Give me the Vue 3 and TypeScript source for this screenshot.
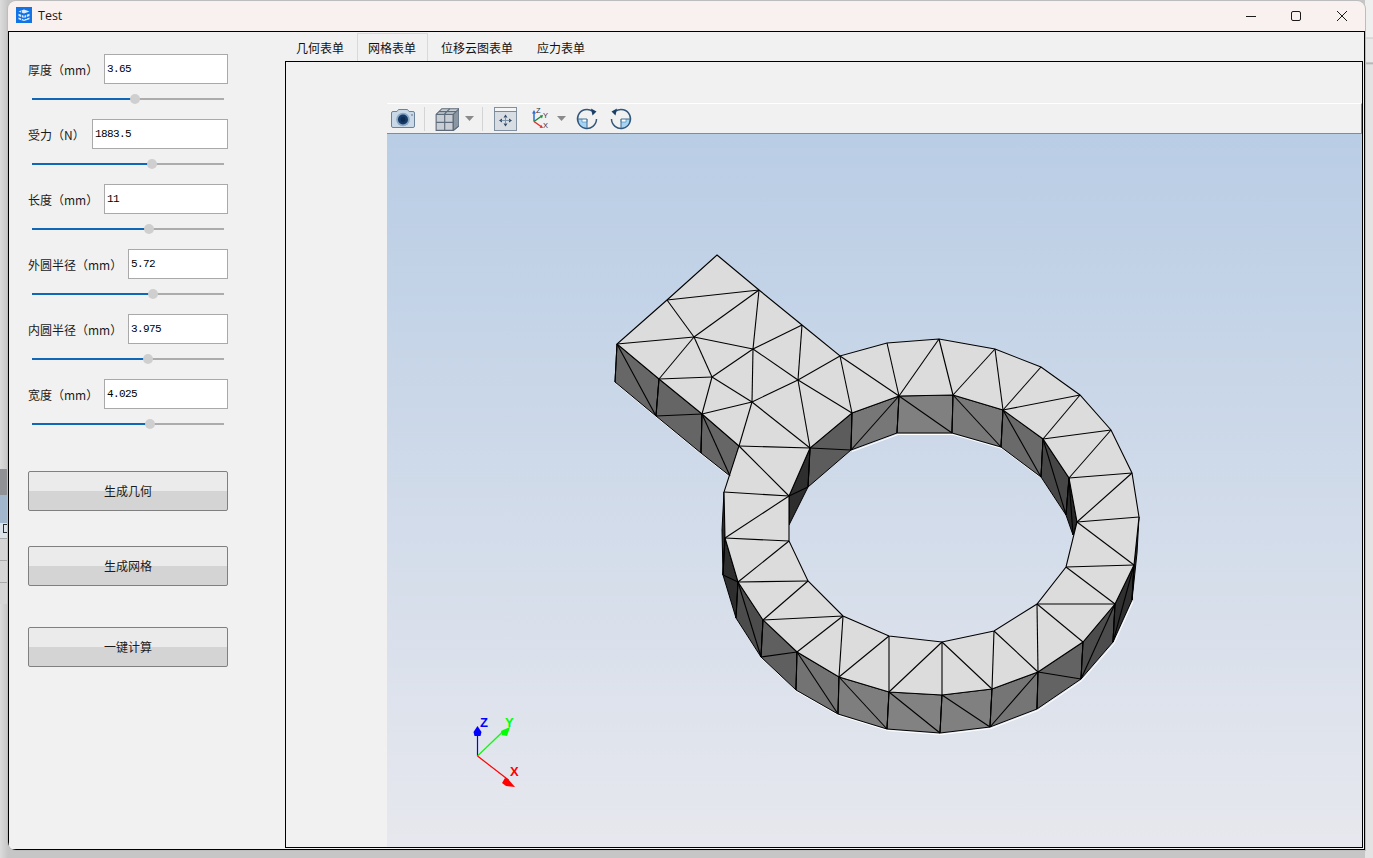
<script setup lang="ts">
type Pt = [number, number]
type Wall = { pts: Pt[]; fill: string }

// 表单参数，inputWidth 对应每行输入框的宽度
const fields = [
  { label: '厚度（mm）', value: '3.65', inputWidth: 124, percent: 53.5 },
  { label: '受力（N）', value: '1883.5', inputWidth: 136, percent: 62.5 },
  { label: '长度（mm）', value: '11', inputWidth: 124, percent: 61 },
  { label: '外圆半径（mm）', value: '5.72', inputWidth: 100, percent: 63 },
  { label: '内圆半径（mm）', value: '3.975', inputWidth: 100, percent: 60.5 },
  { label: '宽度（mm）', value: '4.025', inputWidth: 124, percent: 61.5 },
]

const actions = [
  { text: '生成几何', cls: 'first' },
  { text: '生成网格', cls: 'second' },
  { text: '一键计算', cls: 'third' },
]

const tabs = ['几何表单', '网格表单', '位移云图表单', '应力表单']

const toPoints = (pts: Pt[]) => pts.map((p) => p.join(',')).join(' ')

// 网格顶面外轮廓和内孔，坐标直接用窗口像素
const outer: Pt[] = [
  [717, 255], [759, 290], [802, 325], [840, 356], [887, 343], [939, 339], [995, 349], [1041, 367],
  [1080, 395], [1111, 430], [1132, 473], [1139, 517], [1134, 565], [1115, 604], [1083, 642],
  [1038, 672], [992, 689], [942, 695], [889, 692], [839, 677], [797, 652], [763, 620], [738, 582],
  [725, 538], [724, 492], [739, 446], [702, 414], [659, 379], [617, 344], [667, 300],
]
const inner: Pt[] = [
  [899, 396], [953, 395], [1003, 410], [1043, 439], [1069, 478], [1077, 522], [1066, 567],
  [1037, 604], [994, 631], [942, 642], [889, 636], [843, 616], [808, 581], [789, 541], [789, 496],
  [810, 448], [852, 413],
]
const topPath = `M${outer.map((p) => p.join(' ')).join('L')}ZM${inner.map((p) => p.join(' ')).join('L')}Z`

// 侧面四边形，颜色按朝向取近似值
const walls: Wall[] = [
  { pts: [[617, 344], [659, 379], [656, 416], [615, 382]], fill: '#676767' },
  { pts: [[659, 379], [702, 414], [701, 453], [656, 416]], fill: '#656565' },
  { pts: [[702, 414], [739, 446], [730, 476], [701, 453]], fill: '#666666' },
  { pts: [[810, 448], [852, 413], [851, 450], [808, 487]], fill: '#5c5c5c' },
  { pts: [[789, 496], [810, 448], [808, 487], [789, 525]], fill: '#2e2e2e' },
  { pts: [[852, 413], [899, 396], [897, 433], [851, 450]], fill: '#777777' },
  { pts: [[899, 396], [953, 395], [952, 433], [897, 433]], fill: '#808080' },
  { pts: [[953, 395], [1003, 410], [1001, 447], [952, 433]], fill: '#797979' },
  { pts: [[1003, 410], [1043, 439], [1041, 477], [1001, 447]], fill: '#6a6a6a' },
  { pts: [[1043, 439], [1069, 478], [1066, 515], [1041, 477]], fill: '#464646' },
  { pts: [[1069, 478], [1077, 522], [1073, 535], [1066, 515]], fill: '#2a2a2a' },
  { pts: [[724, 492], [725, 538], [723, 575], [722, 530]], fill: '#2c2c2c' },
  { pts: [[725, 538], [738, 582], [736, 618], [723, 575]], fill: '#2e2e2e' },
  { pts: [[738, 582], [763, 620], [761, 657], [736, 618]], fill: '#4c4c4c' },
  { pts: [[763, 620], [797, 652], [796, 690], [761, 657]], fill: '#5f5f5f' },
  { pts: [[797, 652], [839, 677], [838, 714], [796, 690]], fill: '#737373' },
  { pts: [[839, 677], [889, 692], [887, 729], [838, 714]], fill: '#7e7e7e' },
  { pts: [[889, 692], [942, 695], [940, 733], [887, 729]], fill: '#828282' },
  { pts: [[942, 695], [992, 689], [990, 727], [940, 733]], fill: '#808080' },
  { pts: [[992, 689], [1038, 672], [1037, 709], [990, 727]], fill: '#757575' },
  { pts: [[1038, 672], [1083, 642], [1081, 679], [1037, 709]], fill: '#636363' },
  { pts: [[1083, 642], [1115, 604], [1113, 642], [1081, 679]], fill: '#4c4c4c' },
  { pts: [[1115, 604], [1134, 565], [1132, 600], [1113, 642]], fill: '#303030' },
  { pts: [[1134, 565], [1139, 517], [1137, 553], [1132, 600]], fill: '#2a2a2a' },
]

// 底边下面那条细白线
const glint: Pt[] = [
  [615, 382], [656, 416], [701, 453], [730, 476],
]
const glintRing: Pt[] = [
  [736, 618], [761, 657], [796, 690], [838, 714], [887, 729], [940, 733], [990, 727], [1037, 709],
  [1081, 679], [1113, 642], [1132, 600],
]
const glintHole: Pt[] = [
  [851, 450], [897, 433], [952, 433], [1001, 447], [1041, 477], [1066, 515],
]

// 三角网格的内部边
const edges: [number, number, number, number][] = [
  // 方形凸台
  [667, 300, 759, 290], [759, 290, 694, 337], [667, 300, 694, 337], [617, 344, 694, 337],
  [694, 337, 659, 379], [694, 337, 753, 349], [694, 337, 712, 377], [759, 290, 753, 349],
  [753, 349, 802, 325], [753, 349, 798, 380], [753, 349, 712, 377], [753, 349, 752, 402],
  [802, 325, 798, 380], [798, 380, 840, 356], [798, 380, 852, 413], [798, 380, 752, 402],
  [798, 380, 810, 448], [659, 379, 712, 377], [712, 377, 702, 414], [712, 377, 752, 402],
  [702, 414, 752, 402], [752, 402, 739, 446], [752, 402, 810, 448], [739, 446, 810, 448],
  [739, 446, 789, 496], [724, 492, 789, 496], [840, 356, 852, 413], [840, 356, 899, 396],
  // 圆环顶面
  [887, 343, 899, 396], [939, 339, 899, 396], [939, 339, 953, 395], [995, 349, 953, 395],
  [995, 349, 1003, 410], [1041, 367, 1003, 410], [1080, 395, 1003, 410], [1080, 395, 1043, 439],
  [1111, 430, 1043, 439], [1111, 430, 1069, 478], [1132, 473, 1069, 478], [1132, 473, 1077, 522],
  [1139, 517, 1077, 522], [1134, 565, 1077, 522], [1134, 565, 1066, 567], [1115, 604, 1066, 567],
  [1115, 604, 1037, 604], [1083, 642, 1037, 604], [1038, 672, 1037, 604], [1038, 672, 994, 631],
  [992, 689, 994, 631], [992, 689, 942, 642], [942, 695, 942, 642], [889, 692, 942, 642],
  [889, 692, 889, 636], [839, 677, 889, 636], [839, 677, 843, 616], [797, 652, 843, 616],
  [763, 620, 843, 616], [763, 620, 808, 581], [738, 582, 808, 581], [738, 582, 789, 541],
  [725, 538, 789, 541], [725, 538, 789, 496],
  // 凸台侧面
  [617, 344, 615, 382], [617, 344, 656, 416], [659, 379, 656, 416], [656, 416, 702, 414],
  [702, 414, 701, 453], [702, 414, 730, 476],
  // 内孔侧面
  [810, 448, 851, 450], [810, 448, 808, 487], [789, 496, 808, 487], [852, 413, 851, 450],
  [899, 396, 851, 450], [899, 396, 897, 433], [899, 396, 952, 433], [953, 395, 952, 433],
  [953, 395, 1001, 447], [1003, 410, 1001, 447], [1003, 410, 1041, 477], [1043, 439, 1041, 477],
  [1043, 439, 1066, 515], [1069, 478, 1066, 515], [1069, 478, 1073, 535],
  // 外圈侧面
  [725, 538, 723, 575], [723, 575, 738, 582], [738, 582, 736, 618], [738, 582, 761, 657],
  [763, 620, 761, 657], [761, 657, 797, 652], [797, 652, 796, 690], [797, 652, 838, 714],
  [839, 677, 838, 714], [839, 677, 887, 729], [889, 692, 887, 729], [889, 692, 940, 733],
  [942, 695, 940, 733], [942, 695, 990, 727], [992, 689, 990, 727], [1038, 672, 990, 727],
  [1038, 672, 1037, 709], [1038, 672, 1081, 679], [1083, 642, 1081, 679], [1115, 604, 1081, 679],
  [1115, 604, 1113, 642], [1134, 565, 1113, 642], [1134, 565, 1132, 600],
]
</script>

<template>
  <div class="desktop">
    <div class="backdrop">
      <div class="band-dark"></div>
      <div class="band-blue"><span class="stray"></span></div>
      <div class="band-row"></div>
      <div class="band-row"></div>
      <div class="band-row"></div>
    </div>
    <div class="backdrop-right"></div>

    <div class="window">
      <header class="titlebar">
        <svg class="app-icon" width="16" height="16" viewBox="0 0 16 16">
          <rect width="16" height="16" fill="#1273e6" />
          <path d="M2.500 4.500 8 2.500l5.500 2L8 6.500z M2.500 6.800v2.200L8 11l5.500-2V6.800L8 8.800z M2.500 10.500v1.700L8 14l5.500-1.800v-1.700L8 12.500z" fill="#dcebfb" />
          <path d="M5.500 3.500v9.500M8 8v5M10.500 7v5" stroke="#1273e6" stroke-width="0.800" />
        </svg>
        <span class="title">Test</span>
        <div class="caption">
          <svg width="46" height="30" viewBox="0 0 46 30">
            <path d="M18 15.500h10" stroke="#1a1a1a" stroke-width="1" />
          </svg>
          <svg width="46" height="30" viewBox="0 0 46 30">
            <rect x="18.500" y="10.500" width="9" height="9" rx="1.500" fill="none" stroke="#1a1a1a" stroke-width="1" />
          </svg>
          <svg width="46" height="30" viewBox="0 0 46 30">
            <path d="M18 10l10 10M28 10L18 20" stroke="#1a1a1a" stroke-width="1" />
          </svg>
        </div>
      </header>

      <div class="client">
        <aside class="panel">
          <div class="fields">
            <div v-for="field in fields" :key="field.label" class="field">
              <div class="field-row">
                <label>{{ field.label }}</label>
                <input :value="field.value" :style="{ width: field.inputWidth + 'px' }" readonly />
              </div>
              <div class="slider">
                <div class="slider-fill" :style="{ width: field.percent + '%' }"></div>
                <div class="slider-thumb" :style="{ left: field.percent + '%' }"></div>
              </div>
            </div>
          </div>
          <button v-for="action in actions" :key="action.text" type="button" :class="action.cls">
            {{ action.text }}
          </button>
        </aside>

        <section class="tabs">
          <nav class="tab-bar">
            <span v-for="(tab, i) in tabs" :key="tab" class="tab" :class="{ active: i === 1 }">{{ tab }}</span>
          </nav>
          <div class="pane">
            <div class="viewer">
              <div class="toolbar">
                <svg class="tool camera" width="26" height="22" viewBox="0 0 26 22">
                  <path d="M3 3.500h4l1.500-2h9l1.500 2h4a1.500 1.500 0 0 1 1.500 1.500v13a1.500 1.500 0 0 1-1.500 1.500H3A1.500 1.500 0 0 1 1.500 18V5A1.500 1.500 0 0 1 3 3.500z" fill="#c9d9e8" stroke="#6d8299" stroke-width="1" />
                  <circle cx="13" cy="11.500" r="6.800" fill="#8aa6c2" />
                  <circle cx="13" cy="11.500" r="5" fill="#143a68" />
                  <circle cx="13" cy="11.500" r="2.400" fill="#0d2a50" />
                  <circle cx="22" cy="7" r="0.800" fill="#50647a" />
                </svg>
                <i class="sep sep-a"></i>
                <svg class="tool cube" width="24" height="24" viewBox="1 1.500 21 21">
                  <path d="M2 8 7 3h15v15l-5 4H2z" fill="#c9ced4" stroke="#5d6b7a" stroke-width="1" />
                  <path d="M2 8h15v14M2 15h15M9.500 8v14M4.500 5.500h15M14 3 9 8" fill="none" stroke="#5d6b7a" stroke-width="1" />
                  <path d="M17 8l5-5v15l-5 4z" fill="#8b96a3" stroke="#5d6b7a" stroke-width="1" />
                </svg>
                <svg class="tool caret-a" width="9" height="5" viewBox="0 0 9 5"><path d="M0 0h9L4.500 5z" fill="#8a8a8a" /></svg>
                <i class="sep sep-b"></i>
                <svg class="tool fit" width="23" height="24" viewBox="0 0 23 24">
                  <rect x="0.500" y="0.500" width="22" height="23" fill="#d8dde3" stroke="#8291a1" stroke-width="1" />
                  <rect x="1" y="1" width="21" height="3" fill="#f3f5f7" />
                  <path d="M0 4.500h23" stroke="#7a8998" stroke-width="1" />
                  <path d="M11.500 7.500l2 3h-4zM11.500 19.500l-2-3h4zM5 13.500l3-2v4zM18 13.500l-3 2v-4z" fill="#2e4a66" />
                  <path d="M11.500 10v7M7.500 13.500h8" stroke="#7f94a8" stroke-width="1" />
                </svg>
                <svg class="tool axes" width="22" height="24" viewBox="0 0 22 24">
                  <path d="M6 14.500V5" stroke="#2b6bd6" stroke-width="1.500" />
                  <path d="M6 3l2 3.500H4z" fill="#2b6bd6" />
                  <path d="M6 14.500l7-5" stroke="#1c8a3c" stroke-width="1.500" />
                  <path d="M15 8l-1 3.500-2.200-3z" fill="#1c8a3c" />
                  <path d="M6 14.500l7 5" stroke="#e02e2e" stroke-width="1.500" />
                  <path d="M15 21l-3.500-.2 2-2.800z" fill="#e02e2e" />
                  <text x="8" y="6" class="axis-mini">Z</text>
                  <text x="15" y="11" class="axis-mini">Y</text>
                  <text x="15" y="21" class="axis-mini">X</text>
                </svg>
                <svg class="tool caret-b" width="9" height="5" viewBox="0 0 9 5"><path d="M0 0h9L4.500 5z" fill="#8a8a8a" /></svg>
                <svg class="tool rot-a" width="24" height="24" viewBox="0 0 24 24">
                  <path d="M12 12H2.500a9.500 9.500 0 0 0 9.500 9.500z" fill="#a6d4f2" />
                  <path d="M7 12v3h5v-3" fill="#fff" stroke="#5c9bc8" stroke-width="0.800" />
                  <path d="M2.500 12h9.500v9.500" fill="none" stroke="#3f6f96" stroke-width="1" />
                  <path d="M17.500 4.200A9.500 9.500 0 1 0 21.500 12" fill="none" stroke="#33587c" stroke-width="1.500" />
                  <path d="M16 1.500l5.500 3-4 4z" fill="#1c3f66" />
                </svg>
                <svg class="tool rot-b" width="24" height="24" viewBox="0 0 24 24">
                  <path d="M12 12h9.500a9.500 9.500 0 0 1-9.500 9.500z" fill="#a6d4f2" />
                  <path d="M17 12v3h-5v-3" fill="#fff" stroke="#5c9bc8" stroke-width="0.800" />
                  <path d="M21.500 12H12v9.500" fill="none" stroke="#3f6f96" stroke-width="1" />
                  <path d="M6.500 4.200A9.500 9.500 0 1 1 2.500 12" fill="none" stroke="#33587c" stroke-width="1.500" />
                  <path d="M8 1.500l-5.500 3 4 4z" fill="#1c3f66" />
                </svg>
              </div>

              <svg class="scene" viewBox="387 134 975 713" width="975" height="713">
                <defs>
                  <linearGradient id="sky" x1="0" y1="0" x2="0" y2="1">
                    <stop offset="0" stop-color="#b9cde5" />
                    <stop offset="1" stop-color="#e7e8ee" />
                  </linearGradient>
                </defs>
                <rect x="387" y="134" width="975" height="713" fill="url(#sky)" />

                <polyline :points="toPoints(glint)" transform="translate(1 1.500)" class="glint" />
                <polyline :points="toPoints(glintRing)" transform="translate(1 1.500)" class="glint" />
                <polyline :points="toPoints(glintHole)" transform="translate(1 1.500)" class="glint" />

                <polygon v-for="(w, i) in walls" :key="i" :points="toPoints(w.pts)" :fill="w.fill" stroke="#000" stroke-width="1" />
                <path :d="topPath" fill="#dcdcdc" fill-rule="evenodd" stroke="#000" stroke-width="1.100" />
                <line
                  v-for="(e, i) in edges"
                  :key="'e' + i"
                  :x1="e[0]"
                  :y1="e[1]"
                  :x2="e[2]"
                  :y2="e[3]"
                  stroke="#000"
                  stroke-width="1.100"
                />

                <!-- 左下角坐标轴 -->
                <path d="M477.500 756V732" stroke="#0000ff" stroke-width="1.200" />
                <path d="M477.500 726l4 6-1 4h-6l-1-4z" fill="#0000ff" />
                <path d="M477.500 756l27-26" stroke="#00ff00" stroke-width="1.200" />
                <path d="M510 727l-3 9-5-1-1-4z" fill="#00ff00" />
                <path d="M477.500 756l31 24" stroke="#ff0000" stroke-width="1.200" />
                <path d="M515 787l-9-1-4-3 3-5 3 1z" fill="#ff0000" />
                <text x="480" y="727" class="axis-big" fill="#0000ff">Z</text>
                <text x="505" y="727" class="axis-big" fill="#00ff00">Y</text>
                <text x="510" y="776" class="axis-big" fill="#ff0000">X</text>
              </svg>
            </div>
          </div>
        </section>
      </div>
    </div>
  </div>
</template>

<style>
html,
body {
  margin: 0;
  padding: 0;
  overflow: hidden;
}
</style>

<style scoped>
.desktop {
  position: relative;
  width: 1373px;
  height: 858px;
  padding: 1px 0 0 8px;
  box-sizing: border-box;
  background: linear-gradient(90deg, #dcdcdc, #c6c6c6 8px);
  font-family: 'Noto Sans CJK SC', 'Liberation Sans', sans-serif;
  overflow: hidden;
}

/* 窗口背后露出来的桌面内容 */
.backdrop {
  position: absolute;
  left: 0;
  top: 464px;
  width: 8px;
}

.band-dark {
  height: 26px;
  margin-top: 5px;
  background: #8f9194;
}

.band-blue {
  position: relative;
  height: 43px;
  background: linear-gradient(#a3b7cc 65%, #dde3ea 65%);
}

.stray {
  position: absolute;
  left: 3px;
  top: 29px;
  width: 4px;
  height: 7px;
  border: 1px solid #2b2b2b;
}

.band-row {
  height: 21px;
  border-top: 1px solid #a9a9a9;
  background: #d6d6d6;
}

.backdrop-right {
  position: absolute;
  right: 0;
  top: 0;
  width: 8px;
  height: 100%;
  background: linear-gradient(#efefef 37px, #c8c8c8 38px, #e9e9e9 39px, #e9e9e9 62px, #a8a8a8 63px, #e3e3e3 65px);
}

.window {
  position: relative;
  width: 1357px;
  height: 849px;
  border-radius: 8px 8px 0 8px;
  overflow: hidden;
  box-shadow: 0 0 0 1px #bdbdbd;
}

.titlebar {
  display: flex;
  align-items: center;
  height: 30px;
  padding-left: 8px;
  box-sizing: border-box;
  background: #f8f1ef;
}

.app-icon {
  margin-top: -2px;
}

.title {
  margin: -2px 0 0 6px;
  font-family: 'Open Sans', 'Liberation Sans', sans-serif;
  font-size: 12.500px;
  color: #1a1a1a;
}

.caption {
  display: flex;
  margin-left: auto;
}

.caption svg {
  display: block;
}

.caption svg:first-child {
  margin-right: -1px;
}

.client {
  display: flex;
  height: 819px;
  box-sizing: border-box;
  border: 1px solid #000;
  background: #f1f1f1;
}

.panel {
  position: relative;
  width: 276px;
  flex: none;
  padding: 22px 0 0 19px;
  box-sizing: border-box;
}

.fields {
  width: 200px;
}

.field {
  height: 65px;
}

.field-row {
  display: flex;
  align-items: center;
  justify-content: space-between;
  height: 30px;
}

label {
  font-size: 12px;
  color: #1a1a1a;
  white-space: nowrap;
}

input {
  height: 30px;
  padding: 0 2px;
  box-sizing: border-box;
  border: 1px solid #a9a9a9;
  outline: none;
  background: #fff;
  font-family: 'Liberation Mono', monospace;
  font-size: 11px;
  letter-spacing: -0.600px;
  color: #000;
}

.slider {
  position: relative;
  width: 192px;
  height: 2px;
  margin: 14px 0 0 4px;
  background: #acacac;
}

.slider-fill {
  height: 100%;
  background: #0f68b5;
}

.slider-thumb {
  position: absolute;
  top: -4px;
  width: 10px;
  height: 10px;
  margin-left: -5px;
  border-radius: 50%;
  background: #cfcfcf;
}

button {
  display: block;
  width: 200px;
  height: 40px;
  padding: 0 0 2px;
  box-sizing: border-box;
  border: 1px solid #808080;
  border-radius: 2px;
  background: linear-gradient(#ebebeb 50%, #d4d4d4 50%);
  font-family: inherit;
  font-size: 12px;
  color: #1a1a1a;
}

button.first {
  margin-top: 27px;
}

button.second {
  margin-top: 35px;
}

button.third {
  margin-top: 41px;
}

.tabs {
  display: flex;
  flex-direction: column;
  flex: 1;
  min-width: 0;
}

.tab-bar {
  display: flex;
  height: 29px;
  margin-left: -1px;
  box-sizing: border-box;
}

.tab {
  position: relative;
  height: 28px;
  padding: 6px 11px 0;
  margin-top: 1px;
  box-sizing: border-box;
  border: 1px solid transparent;
  border-bottom: none;
  font-size: 12px;
  line-height: 16px;
  color: #111;
  white-space: nowrap;
}

.tab.active {
  margin: 1px 1px 0 1px;
  padding-left: 10px;
  border-color: #d9d9d9;
  background: #f1f1f1;
  z-index: 1;
}

.pane {
  flex: 1;
  min-height: 0;
  box-sizing: border-box;
  margin: 0 1px 1px 0;
  border: 1px solid #000;
  padding: 41px 0 0 101px;
}

.viewer {
  display: flex;
  flex-direction: column;
  height: 100%;
}

.toolbar {
  display: flex;
  align-items: center;
  flex: none;
  height: 31px;
  box-sizing: border-box;
  border-top: 1px solid #fff;
  border-bottom: 1px solid #8a8a8a;
  border-right: 1px solid #8a8a8a;
  background: #f1f1f1;
}

.tool {
  display: block;
  flex: none;
}

.camera {
  margin-left: 3px;
}

.sep {
  flex: none;
  width: 1px;
  height: 24px;
  background: #d4d4d4;
}

.sep-a {
  margin-left: 8px;
}

.cube {
  margin-left: 10px;
}

.caret-a {
  margin-left: 6px;
}

.sep-b {
  margin-left: 8px;
}

.fit {
  margin-left: 11px;
}

.axes {
  margin-left: 11px;
}

.caret-b {
  margin-left: 7px;
}

.rot-a {
  margin-left: 9px;
}

.rot-b {
  margin-left: 10px;
}

.axis-mini {
  font-family: 'Liberation Sans', sans-serif;
  font-size: 7.500px;
  fill: #333;
}

.scene {
  display: block;
  flex: none;
}

.glint {
  fill: none;
  stroke: #fff;
  stroke-width: 1;
}

.axis-big {
  font-family: 'Liberation Sans', sans-serif;
  font-size: 13px;
  font-weight: 700;
}
</style>
